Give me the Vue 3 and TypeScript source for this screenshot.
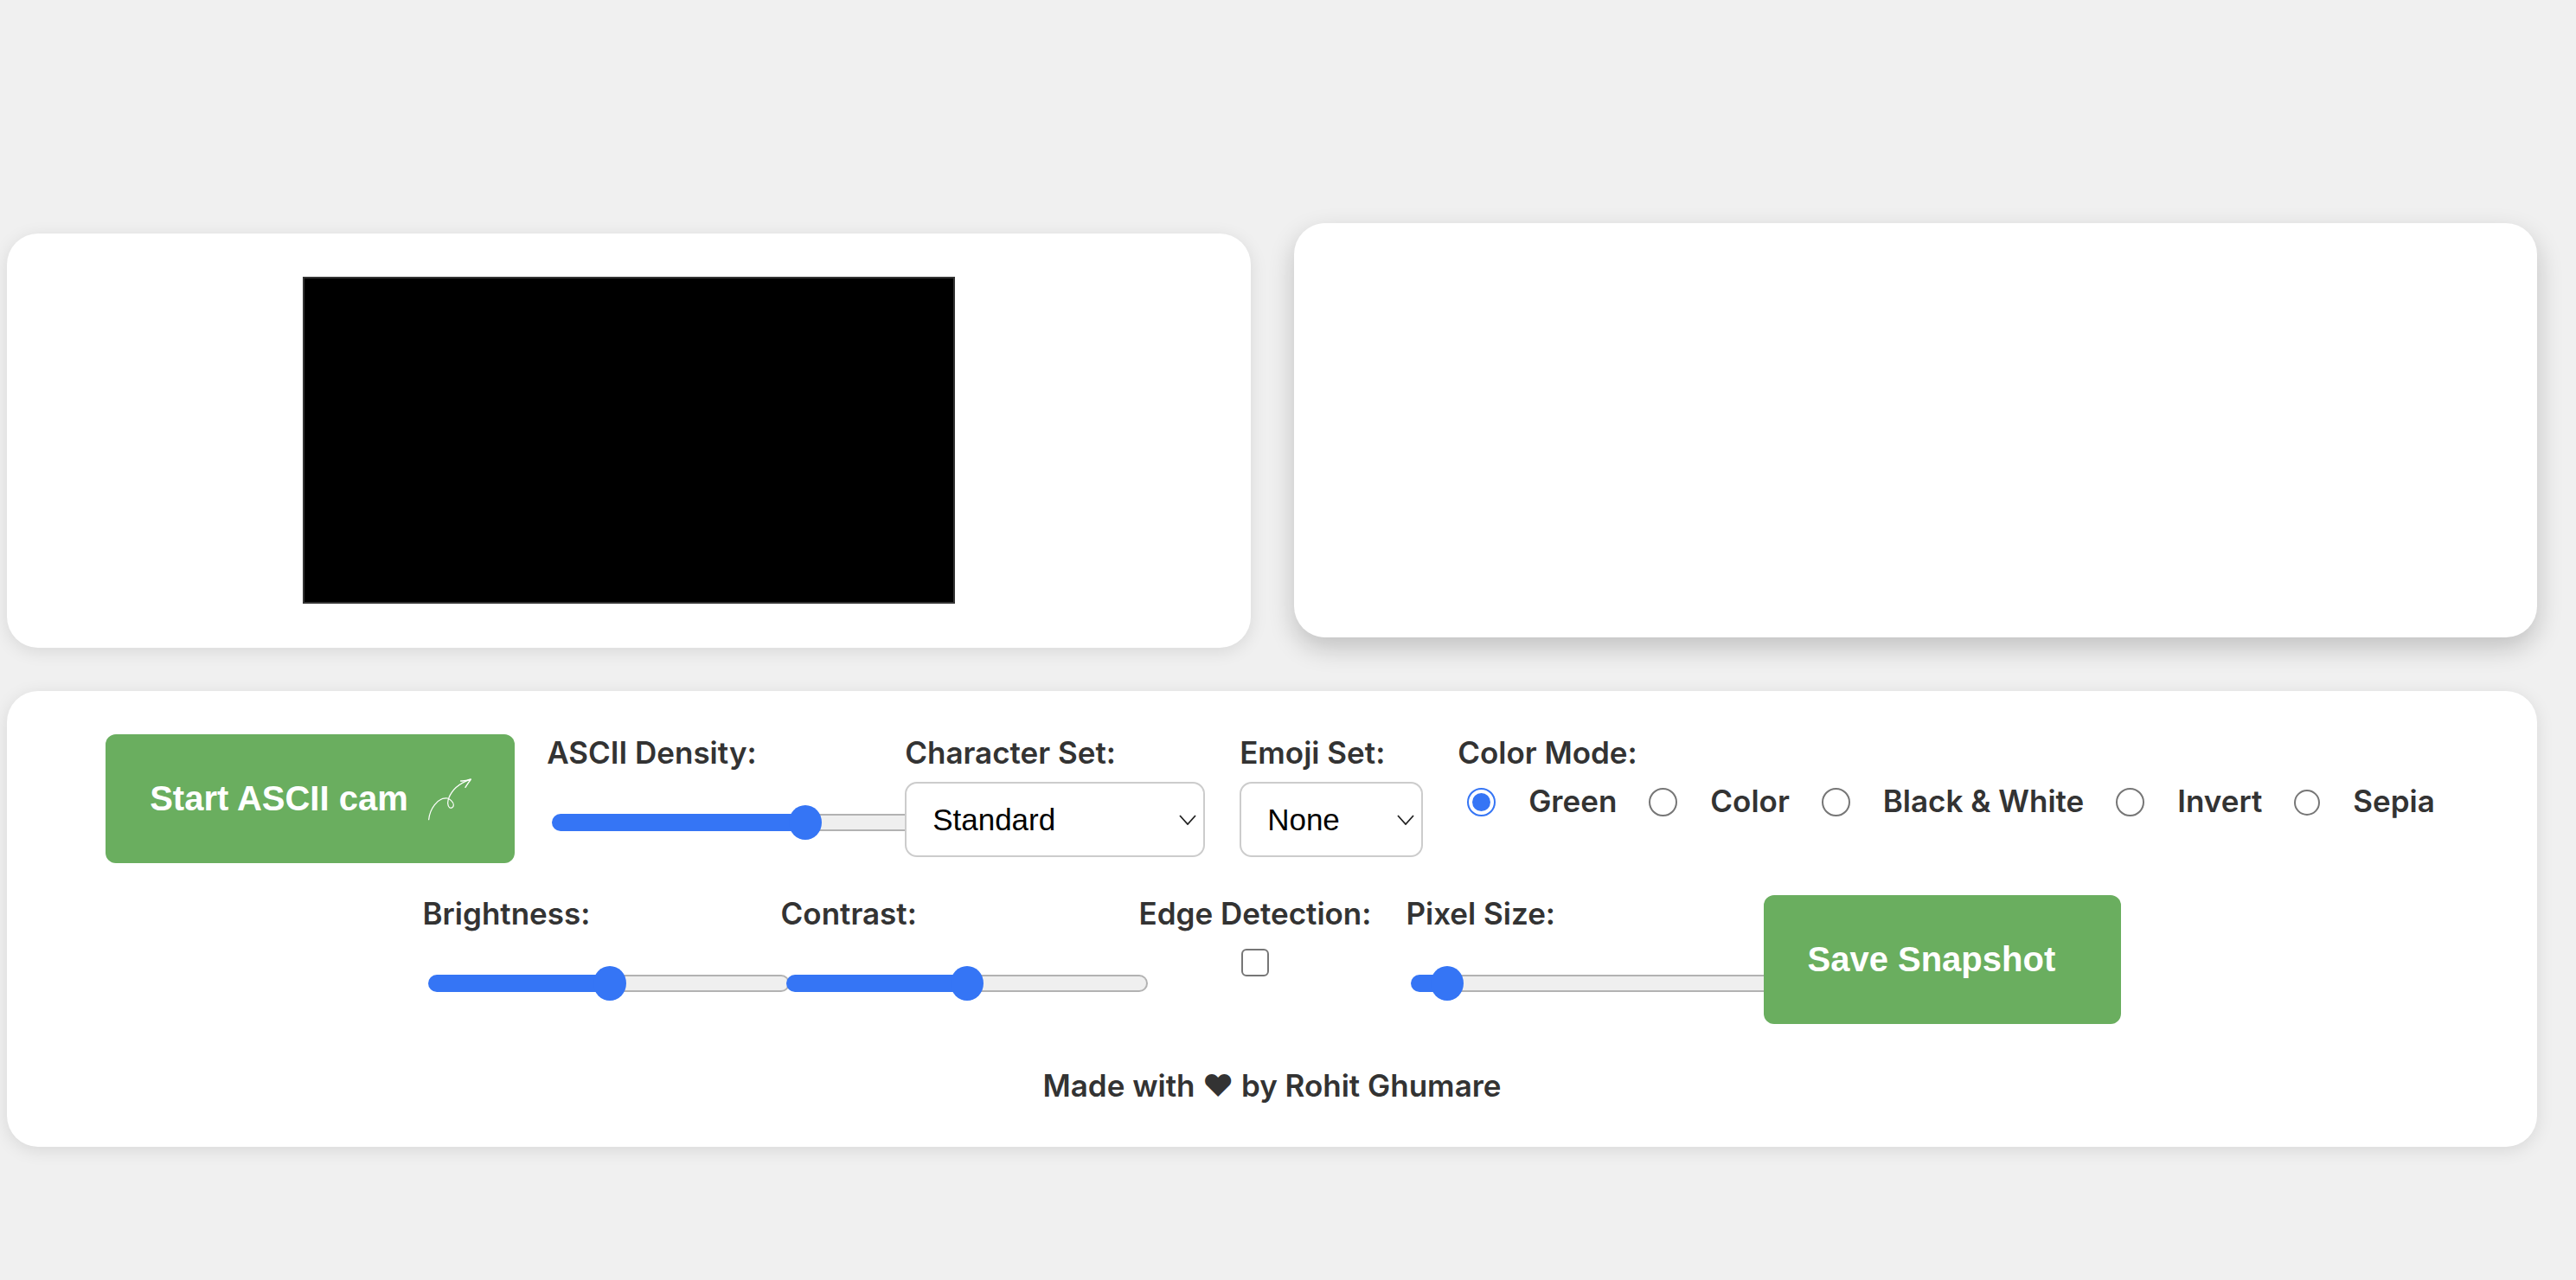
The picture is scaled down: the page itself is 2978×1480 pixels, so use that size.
<template>
  <main class="page">
    <section class="preview">
      <div class="panel panel--video">
        <div class="video"></div>
      </div>
      <div class="panel panel--output"></div>
    </section>

    <section class="panel controls">
      <div class="controls__row controls__row--first">
        <button type="button" class="btn btn--start">
          <span>Start ASCII cam</span>
          <svg class="btn__icon" viewBox="225 50 165 160" fill="none" stroke="#fff" stroke-linecap="round" stroke-linejoin="round">
            <path stroke-width="3.6" d="M233 202C236 168 262 124 298 128C306 130 319 141 319 151C319 160 311 164 305 160C298 155 297 140 303 126C313 100 340 76 376 63" />
            <path stroke-width="4.2" d="M344 68C356 69 368 66 379 62C373 71 366 80 360 90" />
          </svg>
        </button>

        <div class="group group--slider">
          <label class="group__label">ASCII Density:</label>
          <input v-model.number="density" class="slider" type="range" min="0" max="100" step="0.1" :style="fill(density)" />
        </div>

        <div class="group">
          <label class="group__label">Character Set:</label>
          <div class="select select--chars">
            <select v-model="charSet">
              <option v-for="item in charSets" :key="item">{{ item }}</option>
            </select>
            <svg viewBox="0 0 20 12" fill="none" stroke="#222" stroke-width="1.8"><path d="M1 1l9 10 9-10" /></svg>
          </div>
        </div>

        <div class="group">
          <label class="group__label">Emoji Set:</label>
          <div class="select select--emoji">
            <select v-model="emojiSet">
              <option v-for="item in emojiSets" :key="item">{{ item }}</option>
            </select>
            <svg viewBox="0 0 20 12" fill="none" stroke="#222" stroke-width="1.8"><path d="M1 1l9 10 9-10" /></svg>
          </div>
        </div>

        <div class="group">
          <label class="group__label">Color Mode:</label>
          <div class="modes">
            <label v-for="item in colorModes" :key="item" class="mode">
              <input v-model="colorMode" type="radio" name="color-mode" :value="item" />
              <span>{{ item }}</span>
            </label>
          </div>
        </div>
      </div>

      <div class="controls__row controls__row--second">
        <div class="group group--slider">
          <label class="group__label">Brightness:</label>
          <input v-model.number="brightness" class="slider" type="range" min="0" max="100" step="0.1" :style="fill(brightness)" />
        </div>

        <div class="group group--slider">
          <label class="group__label">Contrast:</label>
          <input v-model.number="contrast" class="slider" type="range" min="0" max="100" step="0.1" :style="fill(contrast)" />
        </div>

        <div class="group group--edge">
          <label class="group__label">Edge Detection:</label>
          <input v-model="edges" class="check" type="checkbox" />
        </div>

        <div class="group group--slider">
          <label class="group__label">Pixel Size:</label>
          <input v-model.number="pixelSize" class="slider" type="range" min="0" max="100" step="0.1" :style="fill(pixelSize)" />
        </div>

        <button type="button" class="btn btn--save">Save Snapshot</button>
      </div>

      <p class="credit">Made with ♥ by Rohit Ghumare</p>
    </section>
  </main>
</template>

<script setup lang="ts">
import { ref } from 'vue'

const charSets = ['Standard', 'Blocks', 'Binary', 'Hex']
const emojiSets = ['None', 'Faces', 'Animals']
const colorModes = ['Green', 'Color', 'Black & White', 'Invert', 'Sepia']

const density = ref(72.4)
const brightness = ref(50.4)
const contrast = ref(50.2)
const pixelSize = ref(5.5)
const charSet = ref('Standard')
const emojiSet = ref('None')
const colorMode = ref('Green')
const edges = ref(false)

// blue part of the track ends under the middle of the thumb
function fill(value: number) {
  return { '--fill': `${21 + (value / 100) * 376}px` }
}
</script>

<style>
html,
body {
  margin: 0;
  background: #f0f0f0;
}
</style>

<style scoped>
.page {
  min-height: 1480px;
  box-sizing: border-box;
  padding: 258px 45px 0 8px;
  color: #333;
  font-family: Inter, 'Noto Sans', sans-serif;
  overflow: hidden;
}

.panel {
  background: #fff;
  border-radius: 36px;
  box-shadow: 0 4px 20px rgba(0, 0, 0, 0.1);
}

.preview {
  display: flex;
  gap: 50px;
  align-items: flex-start;
}

.panel--video {
  flex: 1;
  height: 479px;
  box-sizing: border-box;
  margin-top: 12px;
  padding-top: 50px;
  display: flex;
  justify-content: center;
}

.panel--output {
  flex: 1;
  height: 479px;
  box-shadow: 0 12px 30px rgba(0, 0, 0, 0.2);
}

.video {
  width: 754px;
  height: 378px;
  box-sizing: border-box;
  background: #000;
  border: 2px solid #333;
}

.controls {
  margin-top: 50px;
  padding: 50px 0;
}

.controls__row {
  display: flex;
  justify-content: center;
  align-items: flex-start;
  gap: 40px;
}

.controls__row--first {
  padding-right: 4px;
}

.controls__row--second {
  margin-top: 37px;
}

.btn {
  flex: none;
  display: inline-flex;
  align-items: center;
  width: 473px;
  height: 149px;
  box-sizing: border-box;
  padding: 0 0 0 51px;
  border: 0;
  border-radius: 12px;
  background: #6aae5f;
  color: #fff;
  font-family: 'Liberation Sans', Arial, sans-serif;
  font-size: 40px;
  font-weight: 700;
  white-space: nowrap;
}

.btn--start {
  margin-right: -3px;
}

.btn--save {
  width: 413px;
  padding-left: 50px;
}

.btn__icon {
  width: 55px;
  height: 53.3px;
  margin-left: 21px;
}

.group {
  flex: none;
}

.group--slider {
  width: 374px;
}

.group--edge {
  text-align: center;
}

.group__label {
  display: block;
  height: 42px;
  margin-bottom: 13px;
  font-size: 35px;
  font-weight: 600;
  line-height: 42px;
  text-align: left;
  white-space: nowrap;
}

.slider {
  -webkit-appearance: none;
  appearance: none;
  display: block;
  width: 418px;
  height: 40px;
  margin: 40px 0 0 6px;
  padding: 0;
  background: transparent;
}

.slider::-webkit-slider-runnable-track {
  height: 20px;
  box-sizing: border-box;
  border: 2px solid transparent;
  border-radius: 10px;
  background:
    linear-gradient(to right, #3575f5 var(--fill), transparent var(--fill)) border-box,
    linear-gradient(#efefef, #efefef) padding-box,
    linear-gradient(#b2b2b2, #b2b2b2) border-box;
}

.slider::-webkit-slider-thumb {
  -webkit-appearance: none;
  width: 38px;
  height: 40px;
  margin-top: -12px;
  border-radius: 50%;
  background: #3575f5;
}

.select {
  position: relative;
  height: 87px;
}

.select--chars {
  width: 347px;
}

.select--emoji {
  width: 212px;
}

.select select {
  -webkit-appearance: none;
  appearance: none;
  display: block;
  width: 100%;
  height: 100%;
  box-sizing: border-box;
  padding: 0 0 0 30px;
  border: 2px solid #ccc;
  border-radius: 14px;
  background: #fff;
  color: #000;
  font-family: 'Liberation Sans', Arial, sans-serif;
  font-size: 35px;
}

.select svg {
  position: absolute;
  top: 38px;
  right: 10px;
  width: 20px;
  height: 12px;
  pointer-events: none;
}

.modes {
  display: flex;
  align-items: center;
  gap: 26px;
  margin-top: 18px;
}

.mode {
  display: flex;
  align-items: center;
  gap: 38px;
  font-size: 35px;
  font-weight: 600;
  line-height: 33px;
  white-space: nowrap;
}

.mode input {
  -webkit-appearance: none;
  appearance: none;
  flex: none;
  width: 33px;
  height: 33px;
  box-sizing: border-box;
  margin: 2px 0 0 11px;
  border: 2.5px solid #767676;
  border-radius: 50%;
  background: #fff;
}

.mode:last-child input {
  width: 30px;
  height: 30px;
}

.mode input:checked {
  padding: 4px;
  border-color: #3575f5;
  background: #3575f5 content-box;
}

.check {
  -webkit-appearance: none;
  appearance: none;
  display: block;
  width: 32px;
  height: 32px;
  box-sizing: border-box;
  margin: 20px auto 0;
  border: 2.5px solid #767676;
  border-radius: 6px;
  background: #fff;
}

.credit {
  margin: 50px 0 0;
  font-size: 35px;
  font-weight: 600;
  line-height: 42px;
  text-align: center;
}
</style>
